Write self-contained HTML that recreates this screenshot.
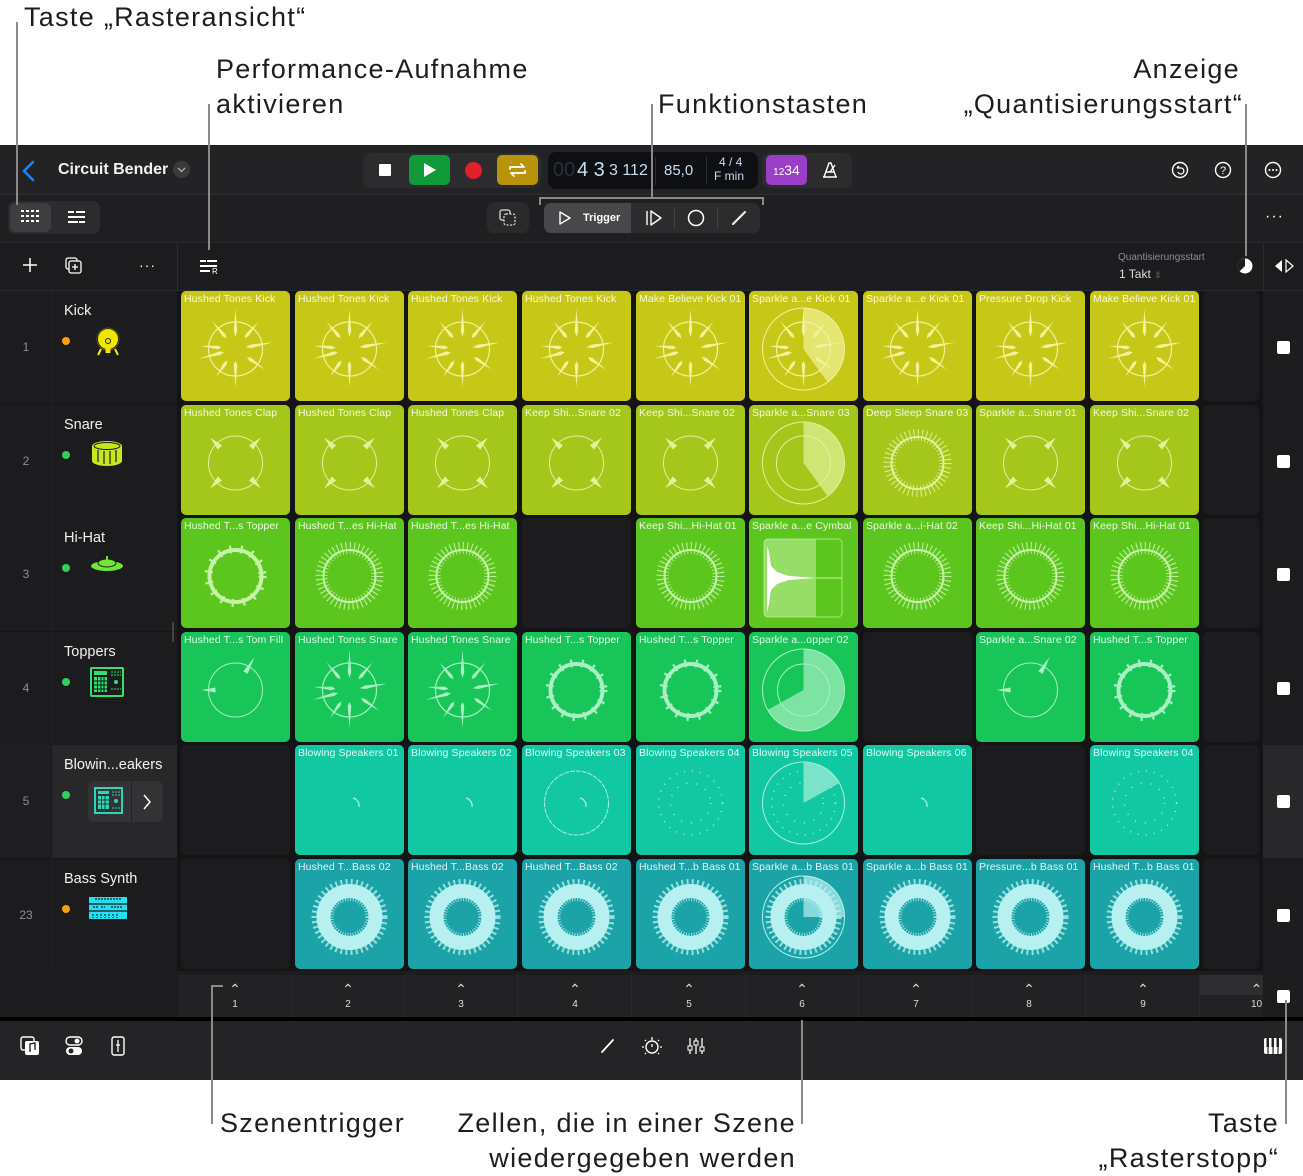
<!DOCTYPE html>
<html><head><meta charset="utf-8">
<style>
*{margin:0;padding:0;box-sizing:border-box}
body{width:1303px;height:1176px;background:#fff;position:relative;overflow:hidden;font-family:"Liberation Sans",sans-serif}
.a{position:absolute}
.ann{position:absolute;font-size:27px;color:#1d1d1f;line-height:34px;white-space:nowrap;letter-spacing:1.3px}
.ln{position:absolute;background:#8a8a8a}
#app{position:absolute;left:0;top:145px;width:1303px;height:935px;background:#141416}
.bar{position:absolute;left:0;width:1303px}
.cell{position:absolute;width:109px;height:110px;border-radius:5px;overflow:hidden}
.cell span{position:absolute;left:3px;top:2px;font-size:10.5px;color:rgba(255,255,255,.88);white-space:nowrap;letter-spacing:.1px}
.cell svg{position:absolute;left:0;top:0}
.empty{background:#1c1c1e}
.r1{background:#c7c717;color:#f2f29a}
.r2{background:#a5c61a;color:#e2f29a}
.r3{background:#5dc61e;color:#c6f2a8}
.r4{background:#18c558;color:#a8efc2}
.r5{background:#12c8a2;color:#a6f0dd}
.r6{background:#1ba3a7;color:#b6f0f0}
.th{position:absolute;left:53px;width:124px;height:113px;background:#1c1c1e}
.tn{position:absolute;left:0;width:52px;height:113px;background:#1c1c1e;color:#8e8e93;font-size:12px;text-align:center}
.tname{position:absolute;left:11px;top:12px;color:#f2f2f2;font-size:14.5px}
.dot{position:absolute;left:9px;top:46px;width:8px;height:8px;border-radius:50%}
.stop{position:absolute;left:1277px;width:13px;height:13px;background:#fff;border-radius:2px}
.sc{position:absolute;top:975px;width:113px;height:42px;border-right:1px solid #2a2a2c;color:#ddd;text-align:center;font-size:10px;padding-top:4px}
.sc div{font-size:14px;line-height:20px;height:20px}
</style></head><body>
<svg width="0" height="0" style="position:absolute">
<defs>
<symbol id="kick" viewBox="0 0 109 110">
<g transform="translate(54.5,58)" fill="currentColor" stroke="none">
<circle r="27" fill="none" stroke="currentColor" stroke-width="1.2"/>
<g><polygon points="0,-40 1.8,-18 0,-12 -1.8,-18"/></g>
<g transform="rotate(40)"><polygon points="0,-36 1.8,-18 0,-14 -1.8,-18"/></g>
<g transform="rotate(80)"><polygon points="0,-38 1.8,-16 0,-10 -1.8,-16"/></g>
<g transform="rotate(125)"><polygon points="0,-36 1.8,-18 0,-14 -1.8,-18"/></g>
<g transform="rotate(180)"><polygon points="0,-38 1.8,-16 0,-12 -1.8,-16"/></g>
<g transform="rotate(215)"><polygon points="0,-34 1.8,-18 0,-14 -1.8,-18"/></g>
<g transform="rotate(255)"><polygon points="0,-38 1.8,-16 0,-12 -1.8,-16"/></g>
<g transform="rotate(275)"><polygon points="0,-36 1.8,-18 0,-14 -1.8,-18"/></g>
<g transform="rotate(320)"><polygon points="0,-36 1.8,-18 0,-14 -1.8,-18"/></g>
</g></symbol>
<symbol id="clap" viewBox="0 0 109 110">
<g transform="translate(54.5,58)" fill="currentColor">
<circle r="27" fill="none" stroke="currentColor" stroke-width="1"/>
<g transform="rotate(45)"><polygon points="0,-36 3,-22 -3,-22"/></g>
<g transform="rotate(135)"><polygon points="0,-36 3,-22 -3,-22"/></g>
<g transform="rotate(225)"><polygon points="0,-36 3,-22 -3,-22"/></g>
<g transform="rotate(315)"><polygon points="0,-36 3,-22 -3,-22"/></g>
</g></symbol>
<symbol id="hat" viewBox="0 0 109 110">
<g transform="translate(54.5,58)" fill="none" stroke="currentColor">
<circle r="26" stroke-width="2"/>
<circle r="28" stroke-width="12" stroke-dasharray="1 3" opacity=".9"/>
</g></symbol>
<symbol id="ring" viewBox="0 0 109 110">
<g transform="translate(54.5,58)" fill="none" stroke="currentColor">
<circle r="26" stroke-width="4"/>
<circle r="27" stroke-width="8" stroke-dasharray="2 9" />
</g></symbol>
<symbol id="thin" viewBox="0 0 109 110">
<g transform="translate(54.5,58)" fill="currentColor">
<circle r="27" fill="none" stroke="currentColor" stroke-width="1"/>
<g transform="rotate(30)"><polygon points="0,-38 2.5,-20 -2.5,-20"/></g>
<g transform="rotate(270)"><polygon points="0,-34 2.5,-20 -2.5,-20"/></g>
</g></symbol>
<symbol id="arc" viewBox="0 0 109 110">
<path d="M58 53 A8 8 0 0 1 64 62" fill="none" stroke="currentColor" stroke-width="1.3"/></symbol>
<symbol id="arcc" viewBox="0 0 109 110">
<path d="M58 53 A8 8 0 0 1 64 62" fill="none" stroke="currentColor" stroke-width="1.3"/>
<circle cx="54.5" cy="58" r="32" fill="none" stroke="currentColor" stroke-width="1" stroke-dasharray="5 1"/></symbol>
<symbol id="dots" viewBox="0 0 109 110">
<circle cx="54.5" cy="58" r="32" fill="none" stroke="currentColor" stroke-width="1.5" stroke-dasharray="1 7"/>
<circle cx="54.5" cy="58" r="20" fill="none" stroke="currentColor" stroke-width="1.5" stroke-dasharray="1 9"/></symbol>
<symbol id="bass" viewBox="0 0 109 110">
<g transform="translate(54.5,58)" fill="none" stroke="currentColor">
<circle r="26" stroke-width="14"/>
<circle r="27" stroke-width="22" stroke-dasharray="1.5 2.5" opacity=".8"/>
</g></symbol>
<symbol id="wave" viewBox="0 0 109 110">
<rect x="15" y="21" width="78" height="78" rx="4" fill="currentColor" opacity=".55"/>
<rect x="67" y="21" width="26" height="78" fill="#5dc61e" /><rect x="15" y="21" width="78" height="78" rx="4" fill="none" stroke="currentColor" opacity=".7"/>
<path d="M18 28 L20 34 L22 48 L28 54 L40 58 L67 60 L40 62 L28 66 L22 72 L20 86 L18 94 Z" fill="#fff"/>
<line x1="67" y1="60" x2="93" y2="60" stroke="currentColor"/></symbol>
</defs></svg>

<!-- annotations -->
<div class="ann" style="left:24px;top:0">Taste „Rasteransicht“</div>
<div class="ann" style="left:216px;top:52px">Performance-Aufnahme</div>
<div class="ann" style="left:216px;top:87px">aktivieren</div>
<div class="ann" style="left:658px;top:87px">Funktionstasten</div>
<div class="ann" style="right:63px;top:52px">Anzeige</div>
<div class="ann" style="right:60px;top:87px">„Quantisierungsstart“</div>
<div class="ann" style="left:220px;top:1106px">Szenentrigger</div>
<div class="ann" style="right:507px;top:1106px">Zellen, die in einer Szene</div>
<div class="ann" style="right:507px;top:1141px">wiedergegeben werden</div>
<div class="ann" style="right:24px;top:1106px">Taste</div>
<div class="ann" style="right:24px;top:1141px">„Rasterstopp“</div>

<div id="app">
<div class="bar" style="top:0;height:50px;background:#232325;border-bottom:1px solid #2e2e30"></div>
<div class="bar" style="top:50px;height:48px;background:#1f1f21;border-bottom:1px solid #2a2a2c"></div>
<div class="bar" style="top:98px;height:48px;background:#1c1c1e;border-bottom:1px solid #2a2a2c"></div>
</div>

<!-- top bar content -->
<svg class="a" style="left:20px;top:160px" width="16" height="22"><path d="M13 2 L4 11 L13 20" fill="none" stroke="#1a84ff" stroke-width="2.5" stroke-linecap="round"/></svg>
<div class="a" style="left:58px;top:161px;color:#f2f2f2;font-size:16px;font-weight:bold">Circuit Bender</div>
<div class="a" style="left:173px;top:161px;width:17px;height:17px;border-radius:50%;background:#3a3a3c"><svg width="17" height="17"><path d="M5 7 L8.5 10.5 L12 7" fill="none" stroke="#aaa" stroke-width="1.3"/></svg></div>

<div class="a" style="left:363px;top:153px;width:178px;height:35px;border-radius:8px;background:#2c2c2e"></div>
<div class="a" style="left:379px;top:164px;width:12px;height:12px;background:#fff;border-radius:1px"></div>
<div class="a" style="left:409px;top:155px;width:41px;height:30px;border-radius:5px;background:#119a38"><svg width="41" height="30"><path d="M15 8 L27 15 L15 22Z" fill="#fff"/></svg></div>
<div class="a" style="left:465px;top:162px;width:17px;height:17px;border-radius:50%;background:#e0202a"></div>
<div class="a" style="left:497px;top:155px;width:41px;height:30px;border-radius:5px;background:#b8940a"><svg width="41" height="30"><path d="M13 14 V12 H27 L24 9 M28 16 V18 H14 L17 21" fill="none" stroke="#fff" stroke-width="1.8" stroke-linecap="round" stroke-linejoin="round"/></svg></div>
<div class="a" style="left:548px;top:152px;width:210px;height:37px;border-radius:8px;background:#0d0f12"></div>
<div class="a" style="left:553px;top:159px;font-size:20px;color:#27303a">00</div>
<div class="a" style="left:577px;top:159px;font-size:20px;color:#c9dcef">4 3</div>
<div class="a" style="left:609px;top:162px;font-size:16px;color:#c9dcef">3 112</div>
<div class="a" style="left:655px;top:157px;width:1px;height:28px;background:#2a2f36"></div>
<div class="a" style="left:664px;top:162px;font-size:15px;color:#c9dcef">85,0</div>
<div class="a" style="left:706px;top:157px;width:1px;height:28px;background:#2a2f36"></div>
<div class="a" style="left:714px;top:155px;font-size:12px;color:#c9dcef;text-align:center;line-height:14px">&nbsp;4 / 4<br>F min</div>
<div class="a" style="left:762px;top:153px;width:90px;height:35px;border-radius:8px;background:#2c2c2e"></div>
<div class="a" style="left:766px;top:155px;width:41px;height:30px;border-radius:5px;background:#9a3ec8;color:#fff;font-size:14px;text-align:center;line-height:30px"><span style="font-size:10px">12</span>34</div>
<svg class="a" style="left:820px;top:160px" width="20" height="20"><path d="M4 17 L9 3 H11 L16 17 Z M3 17 H17 M6 12 H14 M10 12 L15 5" fill="none" stroke="#fff" stroke-width="1.4"/></svg>
<svg class="a" style="left:1170px;top:160px" width="20" height="20"><circle cx="10" cy="10" r="7.5" fill="none" stroke="#fff" stroke-width="1.4"/><path d="M7 8 H11 A3 3 0 1 1 8 12 M7 8 L9 6" fill="none" stroke="#fff" stroke-width="1.3"/></svg>
<svg class="a" style="left:1213px;top:160px" width="20" height="20"><circle cx="10" cy="10" r="7.5" fill="none" stroke="#fff" stroke-width="1.4"/><text x="10" y="14" font-size="11" fill="#fff" text-anchor="middle" font-family="Liberation Sans">?</text></svg>
<svg class="a" style="left:1263px;top:160px" width="20" height="20"><circle cx="10" cy="10" r="7.5" fill="none" stroke="#fff" stroke-width="1.4"/><circle cx="6.5" cy="10" r="1" fill="#fff"/><circle cx="10" cy="10" r="1" fill="#fff"/><circle cx="13.5" cy="10" r="1" fill="#fff"/></svg>

<!-- second toolbar -->
<div class="a" style="left:8px;top:201px;width:92px;height:33px;border-radius:7px;background:#2c2c2e"></div>
<div class="a" style="left:10px;top:203px;width:41px;height:29px;border-radius:6px;background:#3e3e41"></div>
<svg class="a" style="left:20px;top:209px" width="20" height="16"><g fill="#fff"><rect x="1" y="1" width="3" height="2"/><rect x="6" y="1" width="3" height="2"/><rect x="11" y="1" width="3" height="2"/><rect x="16" y="1" width="3" height="2"/><rect x="1" y="6" width="3" height="2"/><rect x="6" y="6" width="3" height="2"/><rect x="11" y="6" width="3" height="2"/><rect x="16" y="6" width="3" height="2"/><rect x="1" y="11" width="3" height="2"/><rect x="6" y="11" width="3" height="2"/><rect x="11" y="11" width="3" height="2"/><rect x="16" y="11" width="3" height="2"/></g></svg>
<svg class="a" style="left:67px;top:209px" width="20" height="16"><g fill="#fff"><rect x="1" y="2" width="6" height="2"/><rect x="9" y="2" width="9" height="2"/><rect x="1" y="7" width="17" height="2"/><rect x="1" y="12" width="10" height="2"/><rect x="12" y="12" width="6" height="2"/></g></svg>
<div class="a" style="left:487px;top:202px;width:42px;height:31px;border-radius:7px;background:#2a2a2c"></div>
<svg class="a" style="left:498px;top:208px" width="20" height="20"><rect x="2" y="2" width="10" height="10" rx="2" fill="none" stroke="#ddd" stroke-width="1.3"/><rect x="6" y="6" width="11" height="11" rx="2" fill="#2a2a2c" stroke="#ddd" stroke-width="1.3" stroke-dasharray="2 1.5"/></svg>
<div class="a" style="left:544px;top:203px;width:216px;height:30px;border-radius:7px;background:#2c2c2e"></div>
<div class="a" style="left:544px;top:203px;width:87px;height:30px;border-radius:7px 0 0 7px;background:#48484b"></div>
<svg class="a" style="left:557px;top:210px" width="16" height="16"><path d="M3 2 L13 8 L3 14Z" fill="none" stroke="#fff" stroke-width="1.4" stroke-linejoin="round"/></svg>
<div class="a" style="left:583px;top:212px;font-size:11px;color:#fff;font-weight:bold">Trigger</div>
<div class="a" style="left:674px;top:207px;width:1px;height:22px;background:#444"></div>
<div class="a" style="left:717px;top:207px;width:1px;height:22px;background:#444"></div>
<svg class="a" style="left:645px;top:209px" width="18" height="18"><path d="M2 2 V16 M6 2 L16 9 L6 16Z" fill="none" stroke="#fff" stroke-width="1.4" stroke-linejoin="round"/></svg>
<svg class="a" style="left:686px;top:208px" width="20" height="20"><circle cx="10" cy="10" r="7.5" fill="none" stroke="#fff" stroke-width="1.5"/></svg>
<svg class="a" style="left:730px;top:209px" width="18" height="18"><path d="M3 15 L15 3" stroke="#fff" stroke-width="2" stroke-linecap="round"/></svg>
<div class="a" style="left:1265px;top:208px;color:#fff;font-size:16px;letter-spacing:1px">···</div>

<!-- header row -->
<svg class="a" style="left:22px;top:257px" width="16" height="16"><path d="M8 1 V15 M1 8 H15" stroke="#fff" stroke-width="1.5"/></svg>
<svg class="a" style="left:64px;top:256px" width="20" height="20"><rect x="2" y="2" width="11" height="11" rx="2" fill="none" stroke="#fff" stroke-width="1.3"/><rect x="5" y="5" width="12" height="12" rx="2" fill="#1c1c1e" stroke="#fff" stroke-width="1.3"/><path d="M11 8 V14 M8 11 H14" stroke="#fff" stroke-width="1.3"/></svg>
<div class="a" style="left:139px;top:257px;color:#fff;font-size:14px;letter-spacing:1px">···</div>
<div class="a" style="left:177px;top:243px;width:1px;height:48px;background:#2a2a2c"></div>
<svg class="a" style="left:200px;top:259px" width="22" height="16"><g fill="#fff"><rect x="0" y="1" width="6" height="2"/><rect x="7" y="1" width="10" height="2"/><rect x="0" y="6" width="17" height="2"/><rect x="0" y="11" width="10" height="2"/></g><text x="12" y="15" font-size="8" fill="#fff" font-family="Liberation Sans">R</text></svg>
<div class="a" style="left:1118px;top:252px;font-size:10px;color:#8e8e93">Quantisierungsstart</div>
<div class="a" style="left:1119px;top:267px;font-size:12px;color:#ddd">1 Takt <span style="color:#777;font-size:9px">⇳</span></div>
<svg class="a" style="left:1236px;top:257px" width="18" height="18"><circle cx="9" cy="9" r="7.5" fill="#fff"/><path d="M9 1.5 A7.5 7.5 0 0 0 3.7 14.3 L9 9Z" fill="#1c1c1e"/></svg>
<div class="a" style="left:1263px;top:243px;width:1px;height:48px;background:#2a2a2c"></div>
<svg class="a" style="left:1273px;top:259px" width="22" height="14"><path d="M9 1 L2 7 L9 13Z" fill="#fff"/><path d="M13 1 L20 7 L13 13Z" fill="none" stroke="#fff" stroke-width="1.2"/></svg>

<!-- track headers -->
<div class="tn" style="top:291px;line-height:113px">1</div>
<div class="th" style="top:291px"><div class="tname">Kick</div><div class="dot" style="background:#ff9f0a"></div>
<svg class="a" style="left:40px;top:34px" width="30" height="34"><circle cx="15" cy="14" r="12" fill="#f2e600" stroke="#1c1c1e" stroke-width="1.5"/><circle cx="15" cy="14" r="10.5" fill="none" stroke="#1c1c1e" stroke-width="1"/><rect x="12.5" y="18" width="5" height="10" fill="#f2e600"/><circle cx="15" cy="16" r="2.5" fill="none" stroke="#1c1c1e"/><path d="M5 30 L8 24 M25 30 L22 24" stroke="#f2e600" stroke-width="2"/></svg></div>
<div class="tn" style="top:405px;line-height:113px">2</div>
<div class="th" style="top:405px"><div class="tname">Snare</div><div class="dot" style="background:#30d158"></div>
<svg class="a" style="left:37px;top:34px" width="34" height="28"><ellipse cx="17" cy="7" rx="15" ry="5" fill="#c8e620"/><rect x="2" y="7" width="30" height="15" fill="#c8e620"/><ellipse cx="17" cy="22" rx="15" ry="5" fill="#c8e620"/><ellipse cx="17" cy="7" rx="13" ry="3.5" fill="none" stroke="#1c1c1e"/><path d="M8 11 V23 M14 12 V25 M20 12 V25 M26 11 V23" stroke="#1c1c1e" stroke-width="1.2"/></svg></div>
<div class="tn" style="top:518px;line-height:113px">3</div>
<div class="th" style="top:518px"><div class="tname">Hi-Hat</div><div class="dot" style="background:#30d158"></div>
<svg class="a" style="left:37px;top:38px" width="34" height="20"><ellipse cx="17" cy="10" rx="16" ry="5" fill="#6ee63a"/><ellipse cx="17" cy="7" rx="9" ry="4" fill="#6ee63a" stroke="#1c1c1e"/><rect x="16" y="0" width="2" height="5" fill="#6ee63a"/></svg></div>
<div class="tn" style="top:632px;line-height:113px">4</div>
<div class="th" style="top:632px"><div class="tname">Toppers</div><div class="dot" style="background:#30d158"></div>
<svg class="a" style="left:37px;top:35px" width="34" height="30"><rect x="1" y="1" width="32" height="28" rx="1" fill="none" stroke="#30e070" stroke-width="2"/><rect x="4" y="4" width="13" height="4" fill="#30e070"/><g fill="#30e070"><rect x="4" y="10" width="13" height="15" /></g><g stroke="#141416"><path d="M4 14 H17 M4 18 H17 M4 22 H17 M7.5 10 V25 M11 10 V25 M14 10 V25"/></g><circle cx="26" cy="15" r="2" fill="#30e070"/><path d="M21 5 H31 M21 8 H31 M21 22 H31" stroke="#30e070" stroke-dasharray="2 1"/></svg></div>
<div class="tn" style="top:745px;line-height:113px;background:#1e1e20">5</div>
<div class="th" style="top:745px;background:#28282a"><div class="tname">Blowin...eakers</div><div class="dot" style="background:#30d158"></div>
<div class="a" style="left:35px;top:36px;width:75px;height:41px;border-radius:6px;background:#333336"></div>
<div class="a" style="left:78px;top:36px;width:1px;height:41px;background:#222"></div>
<svg class="a" style="left:41px;top:42px" width="30" height="28"><rect x="1" y="1" width="27" height="25" fill="none" stroke="#2ad8b8" stroke-width="2"/><rect x="4" y="4" width="11" height="3" fill="#2ad8b8"/><rect x="4" y="9" width="11" height="13" fill="#2ad8b8"/><path d="M4 13 H15 M4 17 H15 M7.5 9 V22 M11 9 V22" stroke="#333336"/><circle cx="22" cy="14" r="2" fill="#2ad8b8"/><path d="M18 5 H26 M18 8 H26 M18 21 H26" stroke="#2ad8b8" stroke-dasharray="2 1"/></svg>
<svg class="a" style="left:88px;top:48px" width="12" height="18"><path d="M3 2 L9 9 L3 16" fill="none" stroke="#fff" stroke-width="1.5"/></svg></div>
<div class="tn" style="top:859px;line-height:113px">23</div>
<div class="th" style="top:859px"><div class="tname">Bass Synth</div><div class="dot" style="background:#ff9f0a"></div>
<svg class="a" style="left:36px;top:38px" width="38" height="22"><rect x="0" y="0" width="38" height="22" fill="#22e0f0"/><path d="M0 7 H38 M0 14 H38" stroke="#1c1c1e" stroke-width="1.3"/><path d="M6 2 H32 M4 10 H9 M12 10 H16 M22 10 H34 M4 17 V21 M8 17 V21 M12 17 V21 M16 17 V21 M20 17 V21 M24 17 V21 M28 17 V21" stroke="#1c1c1e" stroke-width="1.2" stroke-dasharray="2 1"/></svg></div>
<div class="a" style="left:52px;top:291px;width:1px;height:680px;background:#232325"></div>
<div class="a" style="left:172px;top:622px;width:2px;height:20px;background:#444"></div>

<!-- stop column -->
<div class="a" style="left:1263px;top:291px;width:40px;height:680px;background:#1c1c1e"></div>
<div class="a" style="left:1263px;top:745px;width:40px;height:113px;background:#28282a"></div>
<div class="stop" style="top:341px"></div><div class="stop" style="top:455px"></div><div class="stop" style="top:568px"></div><div class="stop" style="top:682px"></div><div class="stop" style="top:795px"></div><div class="stop" style="top:909px"></div>

<!-- column 10 empties -->
<div class="cell empty" style="left:1203px;top:291px;width:56px"></div>
<div class="cell empty" style="left:1203px;top:405px;width:56px"></div>
<div class="cell empty" style="left:1203px;top:518px;width:56px"></div>
<div class="cell empty" style="left:1203px;top:632px;width:56px"></div>
<div class="cell empty" style="left:1203px;top:745px;width:56px"></div>
<div class="cell empty" style="left:1203px;top:859px;width:56px"></div>

<!-- row 1 -->
<div class="cell r1" style="left:181px;top:291px"><span>Hushed Tones Kick</span><svg width="109" height="110"><use href="#kick"/></svg></div>
<div class="cell r1" style="left:295px;top:291px"><span>Hushed Tones Kick</span><svg width="109" height="110"><use href="#kick"/></svg></div>
<div class="cell r1" style="left:408px;top:291px"><span>Hushed Tones Kick</span><svg width="109" height="110"><use href="#kick"/></svg></div>
<div class="cell r1" style="left:522px;top:291px"><span>Hushed Tones Kick</span><svg width="109" height="110"><use href="#kick"/></svg></div>
<div class="cell r1" style="left:636px;top:291px"><span>Make Believe Kick 01</span><svg width="109" height="110"><use href="#kick"/></svg></div>
<div class="cell r1" style="left:749px;top:291px"><span>Sparkle a...e Kick 01</span><svg width="109" height="110"><circle cx="54.5" cy="58" r="41" fill="none" stroke="currentColor"/><path d="M54.5 58 L54.5 17 A41 41 0 0 1 78.6 91.2Z" fill="currentColor" opacity=".7"/><use href="#kick"/></svg></div>
<div class="cell r1" style="left:863px;top:291px"><span>Sparkle a...e Kick 01</span><svg width="109" height="110"><use href="#kick"/></svg></div>
<div class="cell r1" style="left:976px;top:291px"><span>Pressure Drop Kick</span><svg width="109" height="110"><use href="#kick"/></svg></div>
<div class="cell r1" style="left:1090px;top:291px"><span>Make Believe Kick 01</span><svg width="109" height="110"><use href="#kick"/></svg></div>
<!-- row 2 -->
<div class="cell r2" style="left:181px;top:405px"><span>Hushed Tones Clap</span><svg width="109" height="110"><use href="#clap"/></svg></div>
<div class="cell r2" style="left:295px;top:405px"><span>Hushed Tones Clap</span><svg width="109" height="110"><use href="#clap"/></svg></div>
<div class="cell r2" style="left:408px;top:405px"><span>Hushed Tones Clap</span><svg width="109" height="110"><use href="#clap"/></svg></div>
<div class="cell r2" style="left:522px;top:405px"><span>Keep Shi...Snare 02</span><svg width="109" height="110"><use href="#clap"/></svg></div>
<div class="cell r2" style="left:636px;top:405px"><span>Keep Shi...Snare 02</span><svg width="109" height="110"><use href="#clap"/></svg></div>
<div class="cell r2" style="left:749px;top:405px"><span>Sparkle a...Snare 03</span><svg width="109" height="110"><circle cx="54.5" cy="58" r="41" fill="none" stroke="currentColor"/><path d="M54.5 58 L54.5 17 A41 41 0 0 1 78.6 91.2Z" fill="currentColor" opacity=".7"/><circle cx="54.5" cy="58" r="27" fill="none" stroke="currentColor"/></svg></div>
<div class="cell r2" style="left:863px;top:405px"><span>Deep Sleep Snare 03</span><svg width="109" height="110"><use href="#hat"/></svg></div>
<div class="cell r2" style="left:976px;top:405px"><span>Sparkle a...Snare 01</span><svg width="109" height="110"><use href="#clap"/></svg></div>
<div class="cell r2" style="left:1090px;top:405px"><span>Keep Shi...Snare 02</span><svg width="109" height="110"><use href="#clap"/></svg></div>
<!-- row 3 -->
<div class="cell r3" style="left:181px;top:518px"><span>Hushed T...s Topper</span><svg width="109" height="110"><use href="#ring"/></svg></div>
<div class="cell r3" style="left:295px;top:518px"><span>Hushed T...es Hi-Hat</span><svg width="109" height="110"><use href="#hat"/></svg></div>
<div class="cell r3" style="left:408px;top:518px"><span>Hushed T...es Hi-Hat</span><svg width="109" height="110"><use href="#hat"/></svg></div>
<div class="cell empty" style="left:522px;top:518px"></div>
<div class="cell r3" style="left:636px;top:518px"><span>Keep Shi...Hi-Hat 01</span><svg width="109" height="110"><use href="#hat"/></svg></div>
<div class="cell r3" style="left:749px;top:518px"><span>Sparkle a...e Cymbal</span><svg width="109" height="110"><use href="#wave"/></svg></div>
<div class="cell r3" style="left:863px;top:518px"><span>Sparkle a...i-Hat 02</span><svg width="109" height="110"><use href="#hat"/></svg></div>
<div class="cell r3" style="left:976px;top:518px"><span>Keep Shi...Hi-Hat 01</span><svg width="109" height="110"><use href="#hat"/></svg></div>
<div class="cell r3" style="left:1090px;top:518px"><span>Keep Shi...Hi-Hat 01</span><svg width="109" height="110"><use href="#hat"/></svg></div>
<!-- row 4 -->
<div class="cell r4" style="left:181px;top:632px"><span>Hushed T...s Tom Fill</span><svg width="109" height="110"><use href="#thin"/></svg></div>
<div class="cell r4" style="left:295px;top:632px"><span>Hushed Tones Snare</span><svg width="109" height="110"><use href="#kick"/></svg></div>
<div class="cell r4" style="left:408px;top:632px"><span>Hushed Tones Snare</span><svg width="109" height="110"><use href="#kick"/></svg></div>
<div class="cell r4" style="left:522px;top:632px"><span>Hushed T...s Topper</span><svg width="109" height="110"><use href="#ring"/></svg></div>
<div class="cell r4" style="left:636px;top:632px"><span>Hushed T...s Topper</span><svg width="109" height="110"><use href="#ring"/></svg></div>
<div class="cell r4" style="left:749px;top:632px"><span>Sparkle a...opper 02</span><svg width="109" height="110"><circle cx="54.5" cy="58" r="41" fill="none" stroke="currentColor"/><path d="M54.5 58 L54.5 17 A41 41 0 1 1 18.6 77.9Z" fill="currentColor" opacity=".7"/><circle cx="54.5" cy="58" r="26" fill="none" stroke="currentColor"/></svg></div>
<div class="cell empty" style="left:863px;top:632px"></div>
<div class="cell r4" style="left:976px;top:632px"><span>Sparkle a...Snare 02</span><svg width="109" height="110"><use href="#thin"/></svg></div>
<div class="cell r4" style="left:1090px;top:632px"><span>Hushed T...s Topper</span><svg width="109" height="110"><use href="#ring"/></svg></div>
<!-- row 5 -->
<div class="cell empty" style="left:181px;top:745px"></div>
<div class="cell r5" style="left:295px;top:745px"><span>Blowing Speakers 01</span><svg width="109" height="110"><use href="#arc"/></svg></div>
<div class="cell r5" style="left:408px;top:745px"><span>Blowing Speakers 02</span><svg width="109" height="110"><use href="#arc"/></svg></div>
<div class="cell r5" style="left:522px;top:745px"><span>Blowing Speakers 03</span><svg width="109" height="110"><use href="#arcc"/></svg></div>
<div class="cell r5" style="left:636px;top:745px"><span>Blowing Speakers 04</span><svg width="109" height="110"><use href="#dots"/></svg></div>
<div class="cell r5" style="left:749px;top:745px"><span>Blowing Speakers 05</span><svg width="109" height="110"><circle cx="54.5" cy="58" r="41" fill="none" stroke="currentColor"/><path d="M54.5 58 L54.5 17 A41 41 0 0 1 90.4 38.1Z" fill="currentColor" opacity=".7"/><use href="#dots"/></svg></div>
<div class="cell r5" style="left:863px;top:745px"><span>Blowing Speakers 06</span><svg width="109" height="110"><use href="#arc"/></svg></div>
<div class="cell empty" style="left:976px;top:745px"></div>
<div class="cell r5" style="left:1090px;top:745px"><span>Blowing Speakers 04</span><svg width="109" height="110"><use href="#dots"/></svg></div>
<!-- row 6 -->
<div class="cell empty" style="left:181px;top:859px"></div>
<div class="cell r6" style="left:295px;top:859px"><span>Hushed T...Bass 02</span><svg width="109" height="110"><use href="#bass"/></svg></div>
<div class="cell r6" style="left:408px;top:859px"><span>Hushed T...Bass 02</span><svg width="109" height="110"><use href="#bass"/></svg></div>
<div class="cell r6" style="left:522px;top:859px"><span>Hushed T...Bass 02</span><svg width="109" height="110"><use href="#bass"/></svg></div>
<div class="cell r6" style="left:636px;top:859px"><span>Hushed T...b Bass 01</span><svg width="109" height="110"><use href="#bass"/></svg></div>
<div class="cell r6" style="left:749px;top:859px"><span>Sparkle a...b Bass 01</span><svg width="109" height="110"><circle cx="54.5" cy="58" r="41" fill="none" stroke="currentColor"/><path d="M54.5 58 L54.5 17 A41 41 0 0 1 95.5 58Z" fill="currentColor" opacity=".7"/><use href="#bass"/></svg></div>
<div class="cell r6" style="left:863px;top:859px"><span>Sparkle a...b Bass 01</span><svg width="109" height="110"><use href="#bass"/></svg></div>
<div class="cell r6" style="left:976px;top:859px"><span>Pressure...b Bass 01</span><svg width="109" height="110"><use href="#bass"/></svg></div>
<div class="cell r6" style="left:1090px;top:859px"><span>Hushed T...b Bass 01</span><svg width="109" height="110"><use href="#bass"/></svg></div>

<!-- scene trigger row -->
<div class="a" style="left:0;top:971px;width:1303px;height:49px;background:#1c1c1e"></div>
<div class="a" style="left:179px;top:975px;width:1084px;height:42px;background:#222224"></div>
<div class="a" style="left:1200px;top:975px;width:63px;height:20px;background:#2e2e30"></div>
<div class="sc" style="left:179px"><div>⌃</div>1</div>
<div class="sc" style="left:292px"><div>⌃</div>2</div>
<div class="sc" style="left:405px"><div>⌃</div>3</div>
<div class="sc" style="left:519px"><div>⌃</div>4</div>
<div class="sc" style="left:633px"><div>⌃</div>5</div>
<div class="sc" style="left:746px"><div>⌃</div>6</div>
<div class="sc" style="left:860px"><div>⌃</div>7</div>
<div class="sc" style="left:973px"><div>⌃</div>8</div>
<div class="sc" style="left:1087px"><div>⌃</div>9</div>
<div class="sc" style="left:1200px;border:none"><div>⌃</div>10</div>
<div class="stop" style="top:990px"></div>

<!-- bottom toolbar -->
<div class="a" style="left:0;top:1017px;width:1303px;height:4px;background:#000"></div>
<div class="a" style="left:0;top:1021px;width:1303px;height:59px;background:#242426"></div>
<svg class="a" style="left:20px;top:1036px" width="20" height="20"><rect x="1" y="1" width="13" height="13" rx="2" fill="none" stroke="#fff" stroke-width="1.4"/><rect x="5" y="5" width="14" height="14" rx="2" fill="#fff"/><path d="M10 16 V8 L15 7 V14" fill="none" stroke="#242426" stroke-width="1.4"/></svg>
<svg class="a" style="left:65px;top:1036px" width="18" height="20"><rect x="1" y="1" width="16" height="8" rx="4" fill="none" stroke="#fff" stroke-width="1.4"/><circle cx="12" cy="5" r="2.5" fill="#fff"/><rect x="1" y="11" width="16" height="8" rx="4" fill="#fff"/><circle cx="6" cy="15" r="2.5" fill="#242426"/></svg>
<svg class="a" style="left:110px;top:1036px" width="16" height="20"><rect x="2" y="1" width="12" height="18" rx="2" fill="none" stroke="#fff" stroke-width="1.4"/><path d="M8 4 V16 M6 9 H10" stroke="#fff" stroke-width="1.3"/></svg>
<svg class="a" style="left:599px;top:1037px" width="18" height="18"><path d="M3 15 L14 3" stroke="#fff" stroke-width="1.8" stroke-linecap="round"/></svg>
<svg class="a" style="left:641px;top:1035px" width="22" height="22"><circle cx="11" cy="12" r="6" fill="none" stroke="#fff" stroke-width="1.4"/><path d="M11 2 V5 M11 9 V12 M3 12 H1 M21 12 H19 M5 6 L4 5 M17 6 L18 5 M5 18 L4 19 M17 18 L18 19" stroke="#fff" stroke-width="1.3"/></svg>
<svg class="a" style="left:686px;top:1036px" width="20" height="20"><path d="M4 2 V18 M10 2 V18 M16 2 V18" stroke="#fff" stroke-width="1.3"/><rect x="2" y="10" width="4" height="4" fill="#242426" stroke="#fff"/><rect x="8" y="5" width="4" height="4" fill="#242426" stroke="#fff"/><rect x="14" y="11" width="4" height="4" fill="#242426" stroke="#fff"/></svg>
<svg class="a" style="left:1263px;top:1037px" width="20" height="18"><rect x="1" y="1" width="18" height="16" rx="2" fill="#fff"/><path d="M5 1 V17 M10 1 V17 M15 1 V17" stroke="#242426" stroke-width="1.2"/><rect x="3.5" y="1" width="2.5" height="9" fill="#242426"/><rect x="8.5" y="1" width="2.5" height="9" fill="#242426"/><rect x="13.5" y="1" width="2.5" height="9" fill="#242426"/></svg>

<!-- leader lines -->
<div class="ln" style="left:16px;top:22px;width:2px;height:183px"></div>
<div class="ln" style="left:208px;top:104px;width:2px;height:146px"></div>
<div class="ln" style="left:651px;top:104px;width:2px;height:94px"></div>
<div class="ln" style="left:539px;top:197px;width:225px;height:2px"></div>
<div class="ln" style="left:539px;top:197px;width:2px;height:8px"></div>
<div class="ln" style="left:762px;top:197px;width:2px;height:8px"></div>
<div class="ln" style="left:1245px;top:104px;width:2px;height:152px"></div>
<div class="ln" style="left:211px;top:985px;width:2px;height:139px"></div>
<div class="ln" style="left:211px;top:985px;width:12px;height:2px"></div>
<div class="ln" style="left:801px;top:1020px;width:2px;height:104px"></div>
<div class="ln" style="left:1285px;top:1000px;width:2px;height:124px"></div>
</body></html>
